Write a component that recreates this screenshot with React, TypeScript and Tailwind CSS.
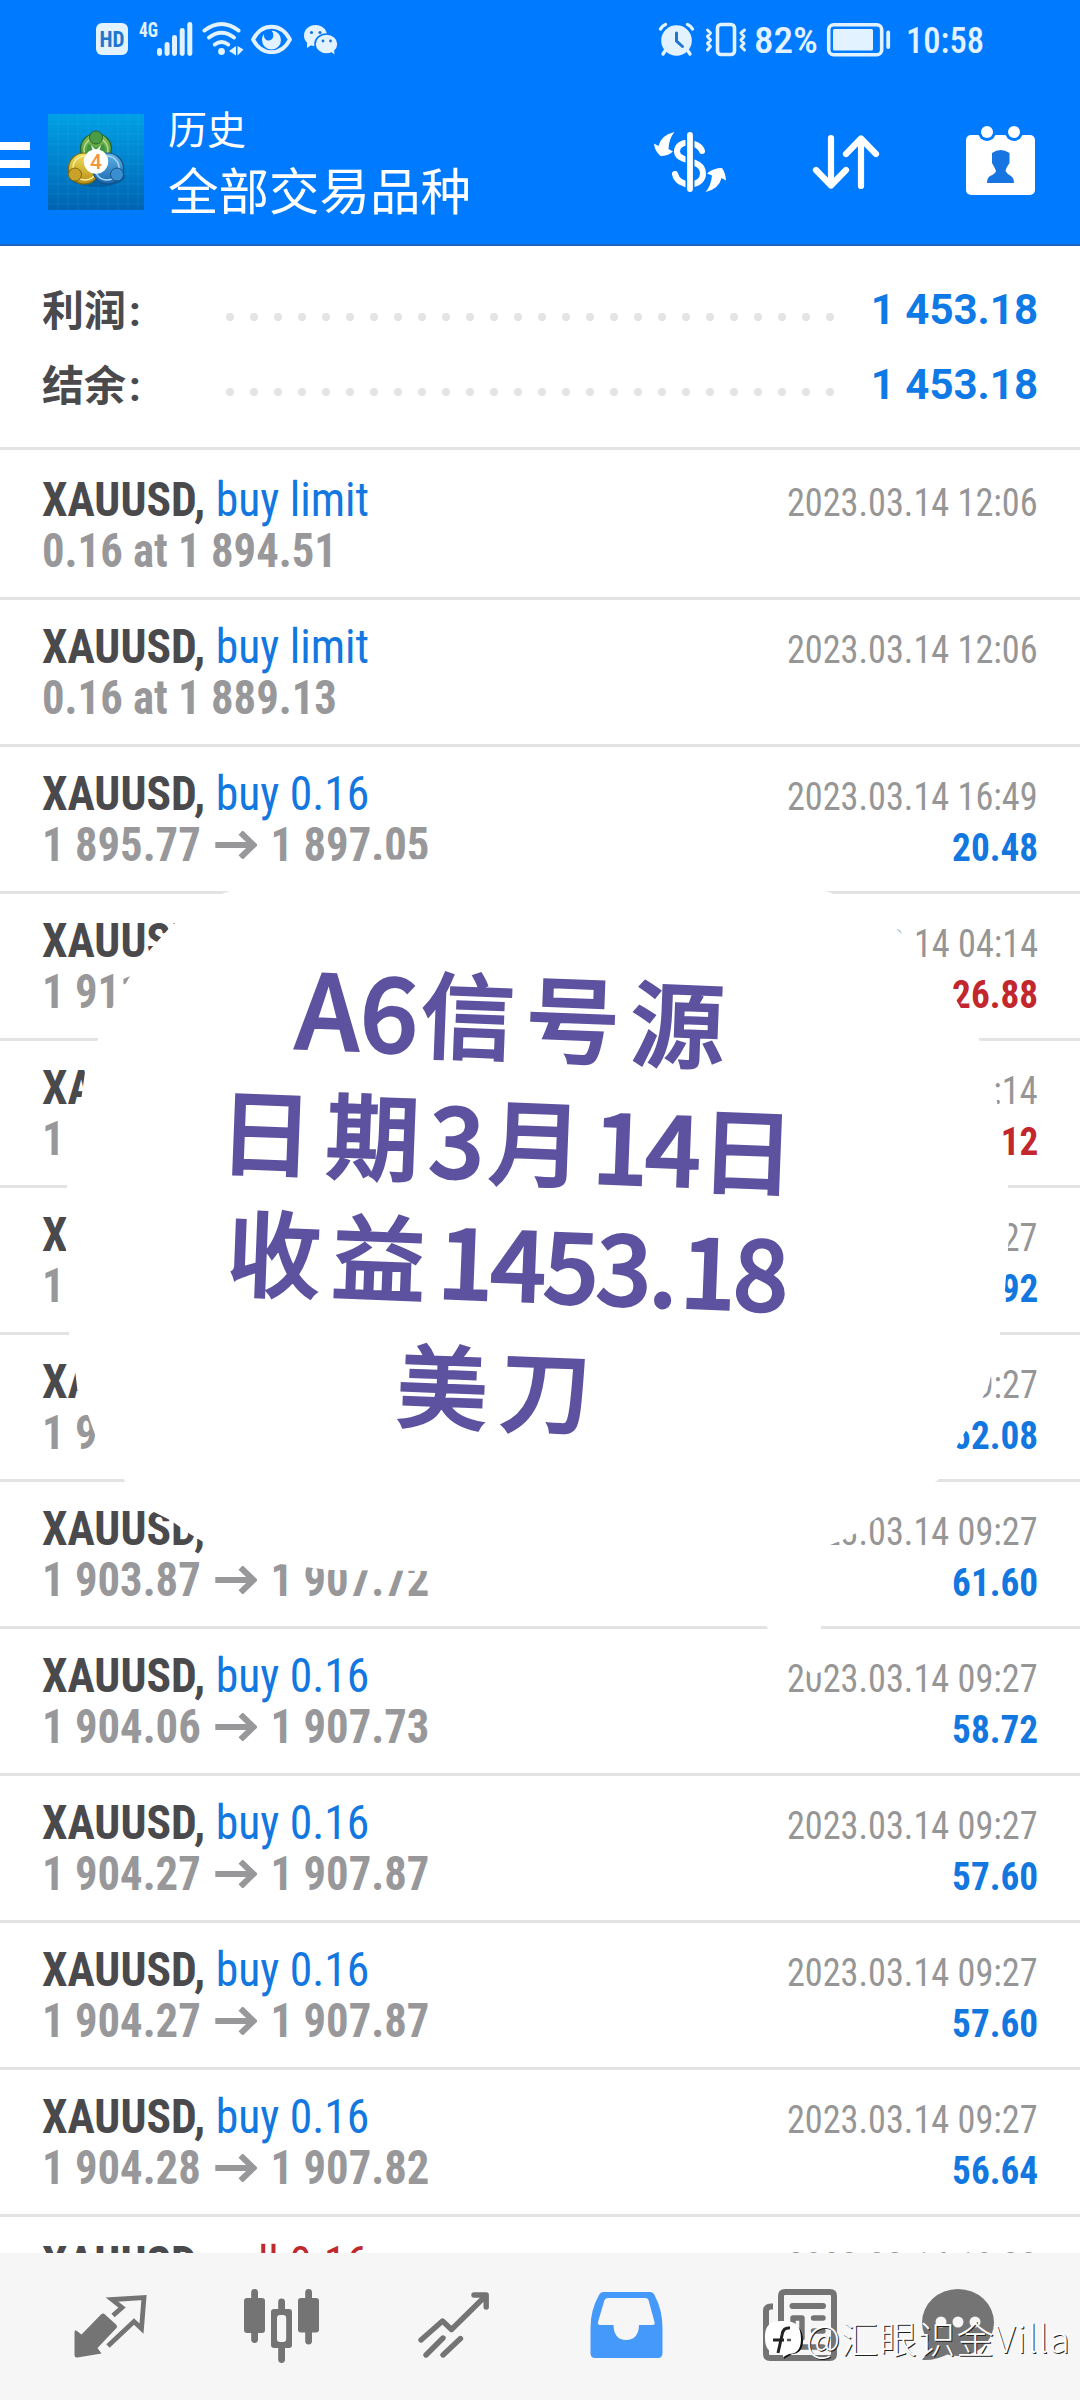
import React from "react";

type Trade = {
  side?: string;
  sell?: boolean;
  left: [string, string?];
  date: string;
  profit?: string;
  loss?: boolean;
};

const trades: Trade[] = [
  { side: "buy limit", left: ["0.16 at 1 894.51"], date: "2023.03.14 12:06" },
  { side: "buy limit", left: ["0.16 at 1 889.13"], date: "2023.03.14 12:06" },
  { side: "buy 0.16", left: ["1 895.77", "1 897.05"], date: "2023.03.14 16:49", profit: "20.48" },
  { left: ["1 911"], date: "3.14 04:14", profit: "26.88", loss: true },
  { left: ["1"], date: ":14", profit: "12", loss: true },
  { left: ["1"], date: "27", profit: "92" },
  { left: ["1 9"], date: "9:27", profit: "52.08" },
  { left: ["1 903.87", "1 907.72"], date: "2023.03.14 09:27", profit: "61.60" },
  { side: "buy 0.16", left: ["1 904.06", "1 907.73"], date: "2023.03.14 09:27", profit: "58.72" },
  { side: "buy 0.16", left: ["1 904.27", "1 907.87"], date: "2023.03.14 09:27", profit: "57.60" },
  { side: "buy 0.16", left: ["1 904.27", "1 907.87"], date: "2023.03.14 09:27", profit: "57.60" },
  { side: "buy 0.16", left: ["1 904.28", "1 907.82"], date: "2023.03.14 09:27", profit: "56.64" },
  { side: "sell 0.16", sell: true, left: ["1 907.80"], date: "2023.03.14 10:30" },
];

function StatusBar() {
  return (
    <div className="flex h-[78px] items-center text-[#e3f2ff]">
      <svg className="ml-[96px] h-[32px] w-[32px]" viewBox="0 0 32 32">
        <rect width="32" height="32" rx="6" fill="currentColor" />
        <text x="16" y="24" textAnchor="middle" textLength="25" lengthAdjust="spacingAndGlyphs" fontFamily="Roboto Condensed" fontWeight="700" fontSize="22" fill="#2277cc">HD</text>
      </svg>
      <svg className="ml-[11px] h-[36px] w-[54px] overflow-visible" viewBox="139 21 54 36" fill="currentColor">
        <text x="139" y="37" textLength="19" lengthAdjust="spacingAndGlyphs" fontFamily="Roboto Condensed" fontWeight="700" fontSize="21">4G</text>
        <rect x="157" y="48" width="5" height="8" rx="2.4" />
        <rect x="164.600" y="42" width="5" height="14" rx="2.400" />
        <rect x="172" y="35" width="5" height="21" rx="2.400" />
        <rect x="179.700" y="28" width="5" height="28" rx="2.400" />
        <rect x="187.300" y="22" width="5" height="34" rx="2.400" />
      </svg>
      <svg className="ml-[9px] h-[36px] w-[42px]" viewBox="202 21 42 36" fill="none" stroke="currentColor" strokeWidth="4" strokeLinecap="round">
        <path d="M204.500 30.500 Q221.500 17.500 238.500 30.500" />
        <path d="M209 37.500 Q221.500 28 234 37.500" />
        <path d="M214.800 44.500 Q221.500 39.500 228.200 44.500" />
        <circle cx="221.500" cy="51.500" r="3.400" fill="currentColor" stroke="none" />
        <path d="M229 51 L236 46 V55.500 Z M237.500 46 L237.500 55.500 L243.500 49.500 Z" fill="currentColor" stroke="none" />
      </svg>
      <svg className="ml-[6px] h-[30px] w-[42px]" viewBox="250 24 42 30">
        <path d="M253 39.500 C262 22.500 281 22.500 290 39.500 C281 56.500 262 56.500 253 39.500 Z" fill="none" stroke="currentColor" strokeWidth="3.800" strokeLinejoin="round" />
        <path d="M271.500 30.500 a9.500 9.500 0 1 1 -9.500 9.500 c0 -2.500 0.600 -4 1.800 -5.800 c0 4.500 2.500 6.300 5 6.300 c4 0 6.500 -5.500 2.700 -10 Z" fill="currentColor" />
      </svg>
      <svg className="ml-[11px] h-[32px] w-[36px]" viewBox="303 23 36 32">
        <ellipse cx="315.500" cy="35.500" rx="11.500" ry="10.500" fill="currentColor" />
        <path d="M307 42 L307 48 L313 44 Z" fill="currentColor" />
        <ellipse cx="326.500" cy="44" rx="11.500" ry="10" fill="currentColor" stroke="#007aff" strokeWidth="1.600" />
        <path d="M330 51 L334.500 54.500 L334 49 Z" fill="currentColor" />
        <g fill="#1f74cf">
          <circle cx="311.500" cy="32.500" r="1.600" />
          <circle cx="320" cy="32.500" r="1.600" />
          <circle cx="323" cy="41" r="1.400" />
          <circle cx="330.500" cy="41" r="1.400" />
        </g>
      </svg>

      <svg className="ml-[319px] h-[36px] w-[38px]" viewBox="658 21 38 36" stroke="currentColor" fill="none" strokeLinecap="round">
        <circle cx="676.500" cy="40.500" r="15.300" fill="currentColor" stroke="none" />
        <path d="M660.500 29 Q662 26 665.500 24.500 M687.500 24.500 Q691 26 692.500 29 M665 51 L663 54 M688 51 L690 54" strokeWidth="3.400" />
        <path d="M676.500 33 V41 L682.500 46.500" stroke="#2277cc" strokeWidth="3" />
      </svg>
      <svg className="ml-[9px] h-[36px] w-[42px]" viewBox="705 21 42 36" fill="none" stroke="currentColor" strokeLinecap="round" strokeLinejoin="round">
        <rect x="717.500" y="24.500" width="17" height="30" rx="3.500" strokeWidth="3.600" />
        <path d="M707.500 30 L710.500 33 L707.500 36.500 L710.500 40 L707.500 43.500 L710.500 46.500 L707.500 50 M744.500 30 L741 33 L744 36.500 L741 40 L744 43.500 L741 46.500 L744.500 50" strokeWidth="3" />
      </svg>
      <svg className="ml-[7px] h-[36px] w-[64px] overflow-visible" viewBox="754 21 64 36" fill="currentColor">
        <text x="754" y="52.500" textLength="64" lengthAdjust="spacingAndGlyphs" fontFamily="Roboto Condensed" fontWeight="500" fontSize="36">82%</text>
      </svg>
      <svg className="ml-[8px] h-[36px] w-[66px]" viewBox="826 21 66 36" fill="none" stroke="currentColor">
        <rect x="828.700" y="24.700" width="53" height="30" rx="5" strokeWidth="3.600" />
        <rect x="833" y="29" width="40" height="21.500" rx="1.500" fill="currentColor" stroke="none" />
        <path d="M888.200 32.500 V47" strokeWidth="3.800" strokeLinecap="round" />
      </svg>
      <svg className="ml-[14px] h-[36px] w-[78px] overflow-visible" viewBox="906 21 78 36" fill="currentColor">
        <text x="906" y="52.500" textLength="78" lengthAdjust="spacingAndGlyphs" fontFamily="Roboto Condensed" fontWeight="500" fontSize="36">10:58</text>
      </svg>
    </div>
  );
}

function AppLogo() {
  return (
    <svg className="mt-[36px] ml-[18px] h-[96px] w-[96px]" viewBox="0 0 96 96">
      <defs>
        <linearGradient id="bg" x1="0" y1="0" x2="0" y2="1">
          <stop offset="0" stopColor="#00a0e6" />
          <stop offset="0.450" stopColor="#0086cf" />
          <stop offset="1" stopColor="#0062b0" />
        </linearGradient>
        <linearGradient id="gr" x1="0" y1="0" x2="0" y2="1">
          <stop offset="0" stopColor="#8cc152" />
          <stop offset="1" stopColor="#2d8a3c" />
        </linearGradient>
        <linearGradient id="ye" x1="0" y1="0" x2="0" y2="1">
          <stop offset="0" stopColor="#f0e05a" />
          <stop offset="1" stopColor="#b98f16" />
        </linearGradient>
        <linearGradient id="bl" x1="0" y1="0" x2="0" y2="1">
          <stop offset="0" stopColor="#5fb4e6" />
          <stop offset="1" stopColor="#1a68b0" />
        </linearGradient>
      </defs>
      <rect width="96" height="96" fill="url(#bg)" />
      <path d="M10 0V96M20 0V96M30 0V96M40 0V96M50 0V96M60 0V96M70 0V96M80 0V96M90 0V96M0 10H96M0 20H96M0 30H96M0 40H96M0 50H96M0 60H96M0 70H96M0 80H96M0 90H96" stroke="#4cc0f0" strokeOpacity="0.150" strokeWidth="1" />
      <ellipse cx="49" cy="62" rx="28" ry="11" fill="#003a70" fillOpacity="0.350" />
      <circle cx="48" cy="35" r="15.500" fill="url(#gr)" stroke="#22642c" strokeWidth="1.200" />
      <circle cx="48" cy="36" r="12" fill="none" stroke="#b9dc8f" strokeWidth="1.500" />
      <circle cx="36" cy="54.500" r="15.500" fill="url(#ye)" stroke="#7d6a12" strokeWidth="1.200" />
      <circle cx="37" cy="54" r="12" fill="none" stroke="#f6eda0" strokeWidth="1.500" />
      <circle cx="60" cy="54.500" r="15.500" fill="url(#bl)" stroke="#174f86" strokeWidth="1.200" />
      <circle cx="59" cy="54" r="12" fill="none" stroke="#a9d8f4" strokeWidth="1.500" />
      <path d="M40 30 L48 34 L56 30 L59 45 H37 Z" fill="#3f9440" />
      <path d="M43 31 L48 36 L53 31 L51 38 H45 Z" fill="#e9f3e4" />
      <circle cx="48" cy="23.500" r="6.500" fill="#4b9a45" stroke="#236a2c" />
      <circle cx="27" cy="60.500" r="6.500" fill="#c9a227" stroke="#7d6a12" />
      <circle cx="69" cy="60.500" r="6.500" fill="#3a8fd0" stroke="#174f86" />
      <circle cx="48" cy="47.500" r="12.200" fill="#fff" />
      <text x="48" y="55" textAnchor="middle" fontFamily="Roboto" fontWeight="500" fontSize="21" fill="#f0953c">4</text>
    </svg>
  );
}

function Header() {
  return (
    <header className="h-[246px] border-b-2 border-[#1c67c4] bg-[#007aff] text-white">
      <StatusBar />
      <div className="flex">
        <div className="mt-[64px] flex w-[30px] flex-col gap-[10px]">
          <span className="h-[8px] bg-white" />
          <span className="h-[8px] bg-white" />
          <span className="h-[8px] bg-white" />
        </div>
        <AppLogo />
        <div className="mt-[22px] ml-[24px] w-[486px] font-['Noto_Sans_CJK_SC',sans-serif]">
          <div className="text-[39px] leading-[55px]">历史</div>
          <div className="text-[50.5px] leading-[66px]">全部交易品种</div>
        </div>
        <svg className="mt-[52px] h-[64px] w-[74px]" viewBox="654 130 74 64" fill="none" stroke="#fff" strokeLinecap="round">
          <path d="M702 151 C699 141 677 139 677 151.500 C677 163 703 158 703 173.500 C703 188 678 188 675 174" strokeWidth="6" />
          <path d="M690 134.500 V189.500" strokeWidth="9" stroke="#007aff" strokeLinecap="butt" />
          <path d="M690 135 V189" strokeWidth="5.800" />
          <path d="M674.500 132 Q661 135 658.500 146 L654 143.500 Q654.500 151 660.500 156 Q668 156 673 151.500 L668.500 149 Q669 138 674.500 132 Z" fill="#fff" stroke="none" />
          <path d="M705.500 192 Q719 189 721.500 178 L726 180.500 Q725.500 173 722 168 Q713 168 707 173.500 L712 175.500 Q711 186 705.500 192 Z" fill="#fff" stroke="none" />
        </svg>
        <svg className="mt-[55px] ml-[83px] h-[58px] w-[70px]" viewBox="811 133 70 58" fill="none" stroke="#fff" strokeWidth="6.200" strokeLinecap="round" strokeLinejoin="round">
          <path d="M831 138 V185.500 M816 170 L831 185.500 L846 170" />
          <path d="M861 186 V138.500 M846 154 L861 138.500 L876 154" />
        </svg>
        <svg className="mt-[47px] ml-[85px] h-[72px] w-[70px]" viewBox="966 125 70 72">
          <rect x="966" y="135" width="69" height="60" rx="5" fill="#fff" />
          <circle cx="987" cy="132" r="9" fill="#007aff" />
          <circle cx="1014" cy="132" r="9" fill="#007aff" />
          <circle cx="987" cy="132" r="6" fill="#fff" />
          <circle cx="1014" cy="132" r="6" fill="#fff" />
          <path d="M992 153 Q1000.500 147 1009.500 153 V163 Q1006 168 1005.500 171 Q1007 174 1011 176 Q1014 178 1014 183 H987 Q987 178 990 176 Q995 174 996 171 Q995 168 992 163 Z" fill="#1675e0" />
        </svg>
      </div>
    </header>
  );
}

function SummaryRow({ label, value }: { label: string; value: string }) {
  return (
    <div className="flex h-[75px] items-center">
      <div className="w-[183px] font-['Noto_Sans_CJK_SC',sans-serif] text-[42px] font-bold text-[#4a4a4d]">
        {label}
        <span className="ml-[3px] font-[Roboto]">:</span>
      </div>
      <div className="mt-[15px] ml-[1px] flex w-[608px] justify-between">
        {Array.from({ length: 26 }, (_, i) => (
          <span key={i} className="size-[8px] rounded-full bg-[#e4e4e5]" />
        ))}
      </div>
      <div className="ml-auto font-[Roboto] text-[42px] font-bold text-[#0f7ae6]">{value}</div>
    </div>
  );
}

function Arrow() {
  return (
    <svg className="mx-[15px] h-[28px] w-[45px]" viewBox="0 0 42 28" preserveAspectRatio="none" fill="none" stroke="currentColor" strokeWidth="6">
      <path d="M0 14 H39 M25.500 1.500 L38.500 14 L25.500 26.500" />
    </svg>
  );
}

function TradeRow({ t, first }: { t: Trade; first: boolean }) {
  return (
    <div className={first ? "h-[150px] shrink-0 border-b-3 border-[#e3e3e3] px-[42px] pt-[24px]" : "h-[147px] shrink-0 border-b-3 border-[#e3e3e3] px-[42px] pt-[21px]"}>
      <div className="flex h-[51px] items-baseline justify-between whitespace-nowrap font-['Roboto_Condensed'] text-[48px] leading-[51px]">
        <div className="origin-left scale-x-[0.95]">
          <span className="font-bold text-[#4a4a4d]">XAUUSD,</span>{" "}
          <span className={t.sell ? "text-[#bf2a2f]" : "text-[#1277df]"}>{t.side}</span>
        </div>
        <div className="origin-right scale-x-[0.93] text-[39px] text-[#969696]">{t.date}</div>
      </div>
      <div className="flex h-[51px] items-baseline justify-between whitespace-nowrap font-['Roboto_Condensed'] text-[48px] font-bold leading-[51px]">
        <div className="flex origin-left scale-x-[0.931] items-center text-[#98989a]">
          {t.left[0]}
          {t.left[1] && <Arrow />}
          {t.left[1]}
        </div>
        <div className={t.loss ? "origin-right scale-x-[0.955] text-[39px] text-[#c1272d]" : "origin-right scale-x-[0.955] text-[39px] text-[#1277df]"}>{t.profit}</div>
      </div>
    </div>
  );
}

function Sticker() {
  return (
    <div className="absolute left-0 top-0 h-[2400px] w-[1080px] font-['Noto_Sans_CJK_SC',sans-serif] text-[94px] font-medium text-[#5d529f] [-webkit-text-stroke:2px_#5d529f]">
      <svg className="absolute left-0 top-[840px] h-[850px] w-[1080px]" viewBox="0 840 1080 850">
        <path
          fill="#fff"
          d="M224 893 L300 868 L370 860 L430 859 L620 850 L760 870 L831 893 L898 930 L918 952 L955 998 L979 1039 L994 1080 L1001 1130 L1008 1186 L1009 1235 L1005 1290 L1000 1333 L989 1385 L969 1425 L938 1480 L885 1512 L871 1522 L858 1532 L843 1540 L830 1545 L825 1600 L821 1627 L821 1672 L812 1675 L790 1655 L767 1627 L720 1580 L600 1590 L430 1571 L330 1570 L280 1564 L240 1556 L205 1543 L190 1534 L170 1520 L150 1510 L124 1480 L97 1440 L88 1415 L78 1395 L75 1370 L69 1333 L66 1260 L67 1186 L80 1108 L85 1072 L98 1039 L113 1006 L130 976 L148 952 L172 925 Z"
        />
      </svg>
      <div className="absolute left-[296px] top-[963px] flex h-[100px] rotate-[2.2deg] items-center whitespace-nowrap leading-[100px]">
        <span className="w-[125px] text-[103px]">A6</span>
        <span className="tracking-[11px]">信号源</span>
      </div>
      <div className="absolute left-[219px] top-[1087px] flex h-[100px] rotate-[2.2deg] items-center whitespace-nowrap leading-[100px]">
        <span className="w-[210px] tracking-[13px]">日期</span>
        <span className="w-[60px] text-[98px]">3</span>
        <span className="w-[104px]">月</span>
        <span className="w-[108px] text-[98px] tracking-[-3px]">14</span>
        <span>日</span>
      </div>
      <div className="absolute left-[227px] top-[1208px] flex h-[100px] rotate-[2.2deg] items-center whitespace-nowrap leading-[100px]">
        <span className="w-[211px] tracking-[11px]">收益</span>
        <span className="text-[98px] tracking-[-3px]">
          1453<span className="tracking-[2px]">.</span>18
        </span>
      </div>
      <div className="absolute left-[397px] top-[1334px] flex h-[100px] rotate-[2.2deg] items-center whitespace-nowrap leading-[100px] text-[91px] tracking-[12px]">美刀</div>
    </div>
  );
}

function BottomNav() {
  return (
    <nav className="flex h-[147px] items-start bg-[#f6f6f6] pt-[35px] text-[#747474]">
      <svg className="ml-[73px] h-[74px] w-[74px]" viewBox="73 2288 74 74">
        <path d="M75.500 2330 L81.500 2334.500 L101 2314.500 Q103 2312.500 105 2314.500 L116 2324.500 Q118 2326.500 116 2328.500 L97.500 2348 L101.500 2353.500 L77.500 2357.500 Q74.500 2358 74.500 2355 V2332 Z" fill="currentColor" />
        <path d="M113 2315.500 L122 2307.500 L112 2299.500 L144 2297.500 L141.500 2328.500 L134 2321.500 L108 2346" fill="none" stroke="currentColor" strokeWidth="4.800" />
      </svg>
      <svg className="ml-[96px] h-[78px] w-[78px]" viewBox="243 2288 78 78" fill="currentColor">
        <rect x="244" y="2298" width="21" height="35" rx="3" />
        <rect x="251.200" y="2289" width="6.800" height="54" rx="3.400" />
        <rect x="298" y="2298" width="21" height="34.500" rx="3" />
        <rect x="305.200" y="2289" width="6.800" height="55.500" rx="3.400" />
        <rect x="278.200" y="2298.500" width="6.800" height="64.500" rx="3.400" />
        <rect x="271" y="2309" width="21" height="39" rx="3" />
        <rect x="277" y="2315" width="9.200" height="27" rx="3" fill="#f6f6f6" />
      </svg>
      <svg className="ml-[95px] h-[74px] w-[76px]" viewBox="416 2288 76 74" fill="none" stroke="currentColor" strokeWidth="5.400" strokeLinecap="round" strokeLinejoin="round">
        <path d="M421 2340 L442.500 2321 L451.500 2329.500 L485 2296.500 M474 2295 H486.200 V2307" />
        <path d="M443 2338 L426 2355 M460.500 2338.500 L443 2355" />
      </svg>
      <svg className="ml-[97px] h-[74px] w-[76px]" viewBox="589 2288 76 74">
        <path fill="#4499fb" fillRule="evenodd" d="M603 2292 H650 Q653 2292 654.500 2295 Q662.500 2310 662.500 2328 V2353 Q662.500 2358 658 2358 H595 Q590.500 2358 590.500 2353 V2328 Q590.500 2310 599 2295 Q600.500 2292 603 2292 Z M608 2298 Q605.500 2298 604.500 2300 L598 2322 Q597.500 2325 600 2325 H613.500 Q614 2340 626 2340 Q638.500 2340 639 2325 H652.500 Q655.500 2325 654.500 2322 L648.500 2300 Q647.500 2298 645.500 2298 Z" />
      </svg>
      <svg className="ml-[97px] h-[76px] w-[78px]" viewBox="762 2288 78 76" fill="none" stroke="currentColor" strokeWidth="6" strokeLinejoin="round">
        <path d="M781 2321 V2296 Q781 2292 785 2292 H830 Q834 2292 834 2296 V2354 Q834 2358 830 2358 H770 Q766 2358 766 2354 V2311 Q766 2306.500 771 2306.500 H773" />
        <path d="M781 2318 V2350" />
        <path d="M792.500 2306 H823" strokeLinecap="round" />
        <path d="M793 2318 H802 V2338 H793 Z M813.500 2318 H823 M813.500 2331 H823 M793 2347 H823" strokeLinecap="round" strokeWidth="5.400" />
      </svg>
      <svg className="ml-[81px] h-[76px] w-[76px]" viewBox="921 2288 76 76">
        <ellipse cx="958" cy="2322.500" rx="36" ry="33.500" fill="currentColor" />
        <path d="M929 2340 Q929 2352 922 2360 Q936 2361 950 2353 Z" fill="currentColor" />
        <circle cx="941" cy="2322" r="5.500" fill="#f6f6f6" />
        <circle cx="958" cy="2322" r="5.500" fill="#f6f6f6" />
        <circle cx="975" cy="2322" r="5.500" fill="#f6f6f6" />
      </svg>
    </nav>
  );
}

function Watermark() {
  return (
    <div className="absolute left-[762px] top-[2311px] flex h-[52px] items-center">
      <svg className="h-[48px] w-[44px]" viewBox="0 0 44 48">
        <path d="M24 10 C36 11 41 16 41 28 C41 37 36 41 30 41 L22 46 L23 40 L36 30 Z" fill="#111" />
        <path d="M20 8 C34 7 39 13 39 26 C39 38 33 41 27 41 L21 44 L21 41 C8 41 3 37 3 25 C3 12 8 8 20 8 Z" fill="#fff" />
        <path d="M28 15 Q21 14 20 22 L16 40 M11 27 H22" fill="none" stroke="#222" strokeWidth="3" />
        <path d="M25 27 H29" fill="none" stroke="#555" strokeWidth="2.500" />
      </svg>
      <div className="whitespace-nowrap font-['Noto_Sans_CJK_SC',sans-serif] text-[37.5px] font-light leading-[52px] tracking-[1px] text-white [text-shadow:1px_1px_0_#222]">@汇眼识金Villa</div>
    </div>
  );
}

export default function App() {
  return (
    <div className="relative h-[2400px] w-[1080px] overflow-hidden bg-white">
      <Header />
      <main className="flex h-[2007px] flex-col overflow-hidden">
        <section className="h-[204px] shrink-0 border-b-3 border-[#e3e3e3] px-[42px] pt-[26px]">
          <SummaryRow label="利润" value="1 453.18" />
          <SummaryRow label="结余" value="1 453.18" />
        </section>
        {trades.map((t, i) => (
          <TradeRow key={i} t={t} first={i === 0} />
        ))}
      </main>
      <BottomNav />
      <Sticker />
      <Watermark />
    </div>
  );
}
